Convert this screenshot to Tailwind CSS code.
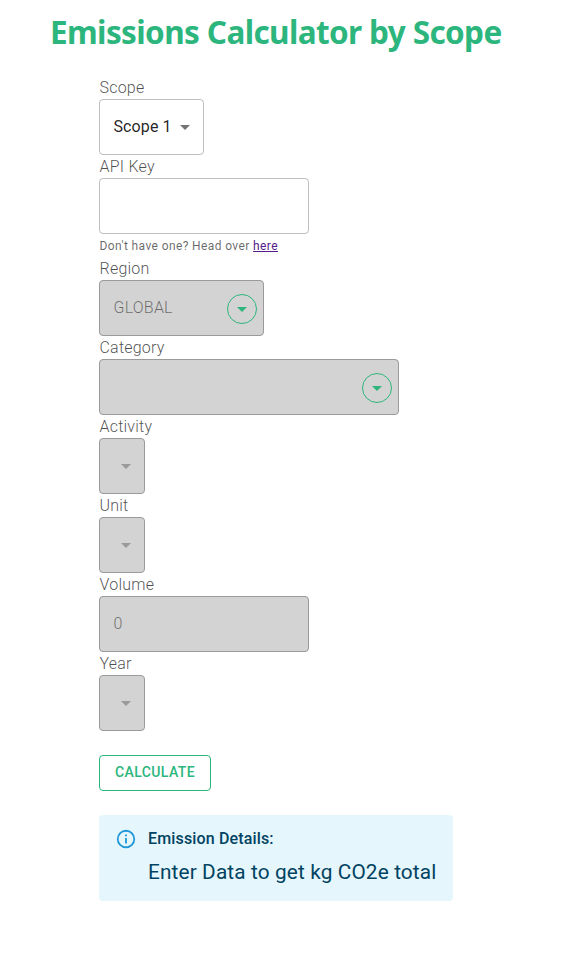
<!DOCTYPE html>
<html lang="en">
<head>
<meta charset="utf-8">
<title>Emissions Calculator by Scope</title>
<script src="https://cdn.jsdelivr.net/npm/@tailwindcss/browser@4"></script>
</head>
<body class="bg-white font-[Roboto,sans-serif] font-light text-base leading-[23px] tracking-[0.22px] text-black/70">
<h1 class="pl-[50px] pt-[8px] h-[76px] font-['Noto_Sans',sans-serif] font-bold text-[31.5px] leading-[48px] tracking-[-0.62px] text-[#2cb67d] whitespace-nowrap">Emissions Calculator by Scope</h1>
<main class="ml-[99px] flex flex-col items-start">
  <label class="pl-[0.5px]">Scope</label>
  <div class="w-[105px] h-14 border border-black/25 rounded flex items-center justify-between pl-[13.5px] pr-[6px] font-normal tracking-[0.1px] text-black/87">
    <span class="whitespace-nowrap pb-[2px]">Scope 1</span>
    <svg class="size-6 shrink-0 fill-black/55" viewBox="0 0 24 24"><path d="M7 10l5 5 5-5z"/></svg>
  </div>
  <label class="pl-[0.5px]">API Key</label>
  <div class="w-[210px] h-14 border border-black/25 rounded"></div>
  <p class="mt-[2px] mb-px h-5 text-xs leading-5 font-normal tracking-[0.39px] text-black/60 pl-[0.5px]">Don't have one? Head over <a class="underline text-[#551a8b]">here</a></p>
  <label class="pl-[0.5px]">Region</label>
  <div class="w-[165px] h-14 border border-[#9a9a9a] bg-[#d3d3d3] rounded flex items-center justify-between pl-[13.5px] pr-[6px] text-black/50">
    <span class="pb-[2px]">GLOBAL</span>
    <span class="size-[30px] mt-[2px] rounded-full border border-[#2cb67d] flex items-center justify-center"><svg class="size-6 fill-[#2cb67d]" viewBox="0 0 24 24"><path d="M7 10l5 5 5-5z"/></svg></span>
  </div>
  <label class="pl-[0.5px]">Category</label>
  <div class="w-[300px] h-14 border border-[#9a9a9a] bg-[#d3d3d3] rounded flex items-center justify-end pr-[6px]">
    <span class="size-[30px] mt-[2px] rounded-full border border-[#2cb67d] flex items-center justify-center"><svg class="size-6 fill-[#2cb67d]" viewBox="0 0 24 24"><path d="M7 10l5 5 5-5z"/></svg></span>
  </div>
  <label class="pl-[0.5px]">Activity</label>
  <div class="w-[46px] h-14 border border-[#9a9a9a] bg-[#d3d3d3] rounded flex items-center justify-end pr-[6px]">
    <svg class="size-6 fill-[#9a9a9a]" viewBox="0 0 24 24"><path d="M7 10l5 5 5-5z"/></svg>
  </div>
  <label class="pl-[0.5px]">Unit</label>
  <div class="w-[46px] h-14 border border-[#9a9a9a] bg-[#d3d3d3] rounded flex items-center justify-end pr-[6px]">
    <svg class="size-6 fill-[#9a9a9a]" viewBox="0 0 24 24"><path d="M7 10l5 5 5-5z"/></svg>
  </div>
  <label class="pl-[0.5px]">Volume</label>
  <div class="w-[210px] h-14 border border-[#9a9a9a] bg-[#d3d3d3] rounded flex items-center pl-[13.5px] pb-[2px] text-black/50">0</div>
  <label class="pl-[0.5px]">Year</label>
  <div class="w-[46px] h-14 border border-[#9a9a9a] bg-[#d3d3d3] rounded flex items-center justify-end pr-[6px]">
    <svg class="size-6 fill-[#9a9a9a]" viewBox="0 0 24 24"><path d="M7 10l5 5 5-5z"/></svg>
  </div>
  <button class="mt-6 w-[112px] h-9 border border-[#2cb67d] rounded text-sm font-medium tracking-[0.4px] text-[#2cb67d] pb-[2px]">CALCULATE</button>
  <section class="mt-6 w-[354px] h-[86px] rounded bg-[#e5f6fd] text-[#014361] px-4 py-[6px] flex">
    <svg class="size-[22px] mt-[7px] mr-3 -ml-[0.5px] shrink-0 fill-[#1f97d8]" viewBox="0 0 24 24"><path d="M11,7H13V9H11V7M11,11H13V17H11V11M12,2A10,10 0 0,0 2,12A10,10 0 0,0 12,22A10,10 0 0,0 22,12A10,10 0 0,0 12,2M12,20C7.59,20 4,16.41 4,12C4,7.59 7.59,4 12,4C16.41,4 20,7.59 20,12C20,16.41 16.41,20 12,20Z"/></svg>
    <div class="pt-[6px] -ml-[0.5px] whitespace-nowrap">
      <h2 class="font-medium text-base leading-6 tracking-[0.15px]">Emission Details:</h2>
      <p class="mt-[6px] font-normal text-[20.8px] leading-[30px] tracking-[0.13px]">Enter Data to get kg CO2e total</p>
    </div>
  </section>
</main>
</body>
</html>
